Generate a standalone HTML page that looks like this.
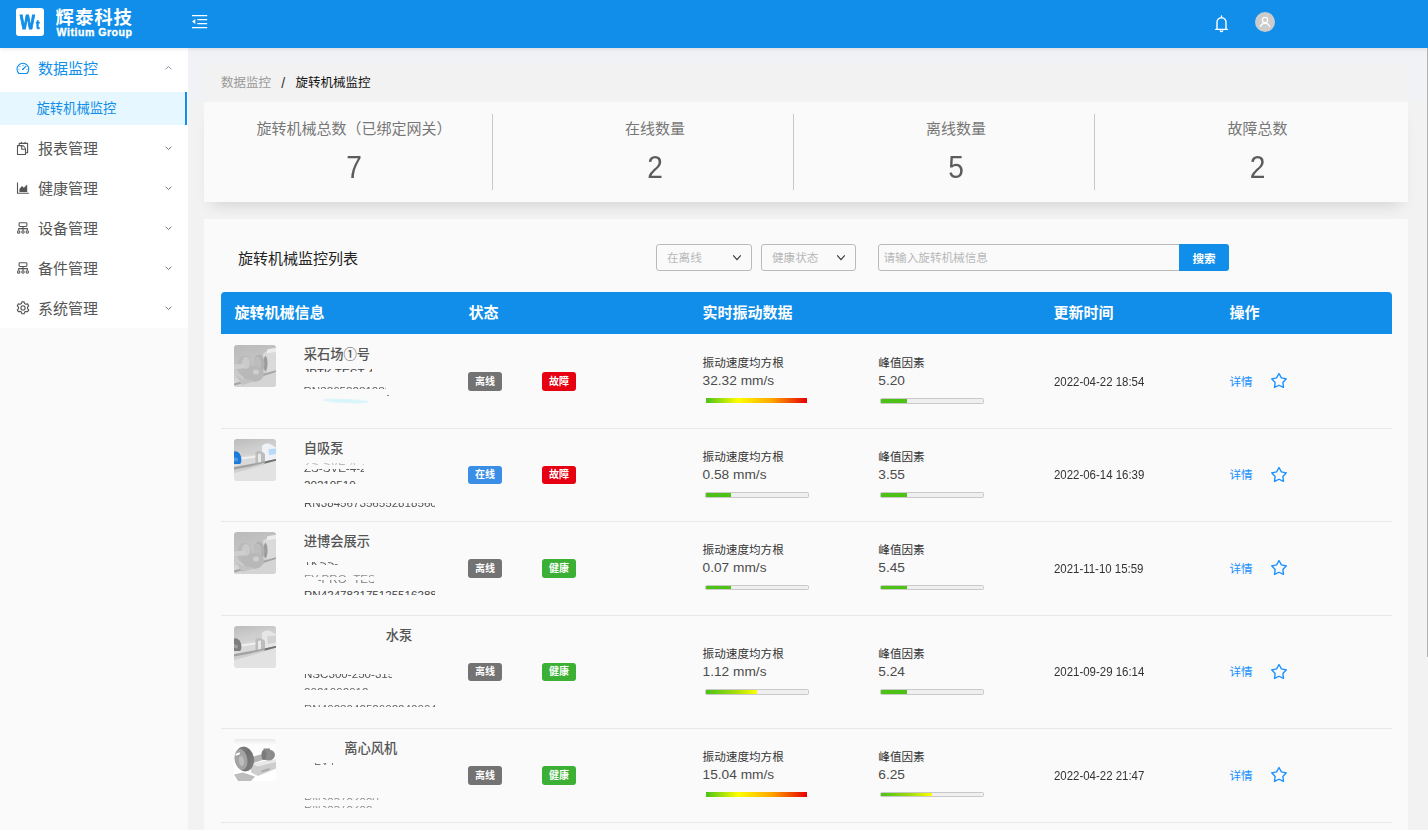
<!DOCTYPE html>
<html lang="zh-CN">
<head>
<meta charset="utf-8">
<title>旋转机械监控</title>
<style>
*{box-sizing:border-box;margin:0;padding:0}
html,body{width:1428px;height:830px;overflow:hidden}
body{position:relative;background:#f0f2f5;font-family:"Liberation Sans","Noto Sans CJK SC",sans-serif;color:#444;font-size:12px}
ul{list-style:none}
/* header */
.hd{position:absolute;left:0;top:0;width:1428px;height:48px;background:#108ee9;z-index:5;box-shadow:0 1px 4px rgba(0,21,41,.1)}
.logo{position:absolute;left:16px;top:8px;width:28px;height:28px;border-radius:3px;background:#fff;color:#108ee9;font-weight:bold;overflow:hidden}
.logo b{position:absolute;left:3.8px;top:2.7px;font-weight:700;font-size:19.5px;line-height:22px;transform:scaleX(.8);transform-origin:0 0;-webkit-text-stroke:1px #108ee9}
.logo i{position:absolute;left:19.8px;top:10px;font-weight:700;font-size:12.5px;line-height:14px;font-style:normal;transform:scaleX(.85);transform-origin:0 0;-webkit-text-stroke:.7px #108ee9}
.brand{position:absolute;left:55.6px;top:6.5px;color:#fff;font-weight:bold;font-size:18.4px;line-height:22px;white-space:nowrap;letter-spacing:.95px}
.brand2{position:absolute;left:56.6px;top:25.6px;color:#fff;font-weight:bold;font-size:10.6px;line-height:13px;white-space:nowrap;letter-spacing:.5px;-webkit-text-stroke:.35px #fff}
.fold{position:absolute;left:191px;top:14px}
.bell{position:absolute;left:1213px;top:13.7px}
.avatar{position:absolute;left:1255px;top:12px;width:20px;height:20px;border-radius:50%;background:#ccc}
/* sidebar */
.side{position:absolute;left:0;top:48px;width:188px;height:782px;background:#fafafa}
.menu{background:#fff;height:280px}
.menu li.t{position:relative;height:40px;line-height:42px;font-size:15px;color:#555;padding-left:38px}
.menu li.t svg.ic{position:absolute;left:16px;top:13px}
.menu li.t svg.ar{position:absolute;left:164px;top:16px}
.menu li.t.on{color:#108ee9}
.menu li.s{position:relative;height:33px;margin:4px 0 3px;line-height:34px;font-size:13.3px;color:#108ee9;background:#e6f7ff;padding-left:36.5px;border-right:2px solid #108ee9;width:187px}
.sb{position:absolute;left:1427px;top:48px;width:1px;height:609px;background:#b2b2b2;z-index:6}
/* main */
.wrap{position:absolute;left:188px;top:101px;width:1240px;height:729px;background:#f2f2f2}
.bcbox{position:absolute;left:204px;top:65px;width:1204px;height:37px;background:#f2f2f2}
.bc{position:absolute;left:221px;top:72.6px;font-size:12.5px;line-height:20px;color:#999;white-space:nowrap}
.bc em{font-style:normal;color:#111}
.bc span{display:inline-block;width:24.5px;text-align:center;color:#333;font-size:14px;line-height:20px;vertical-align:top;position:relative;top:.5px}
.stats{position:absolute;left:204px;top:102px;width:1204px;height:100px;background:#fafafa;box-shadow:0 10px 15px -8px rgba(0,0,0,.14);display:flex}
.stats .c{flex:1;padding:12px 12px 12px 12px}
.stats .c div{height:76px;border-right:1px solid #c8c8c8;text-align:center}
.stats .c:last-child div{border-right:0}
.stats p{font-size:15px;line-height:20px;color:#777;padding-top:4.5px}
.stats strong{display:block;font-weight:normal;font-size:32px;line-height:40px;color:#5c5c5c;margin-top:8px;transform:scaleX(.88)}
.card{position:absolute;left:204px;top:219px;width:1204px;height:640px;background:#fafafa}
.ttl{position:absolute;left:34px;top:28.7px;font-size:15px;line-height:22px;color:#222}
.sel{position:absolute;top:25px;height:27px;border:1px solid #bbb;border-radius:3px;font-size:11.6px;line-height:25px;color:#b8b8b8;padding-left:10px;background:#fafafa}
.sel svg{position:absolute;right:9px;top:9px}
.inp{position:absolute;left:674px;top:25px;width:303px;height:27px;border:1px solid #bbb;border-radius:3px 0 0 3px;font-size:11.6px;line-height:25px;color:#b8b8b8;padding-left:4.5px}
.btn{position:absolute;left:975px;top:25px;width:50px;height:27px;background:#108ee9;color:#fff;font-weight:bold;font-size:11.6px;line-height:29px;text-align:center;border-radius:0 3px 3px 0}
.tb{position:absolute;left:17px;top:73px;width:1171px}
.thd{display:flex;height:42px;background:#108ee9;border-radius:4px 4px 0 0;color:#fff;font-size:15px;font-weight:bold;line-height:42px}
.th1{padding-left:13.5px}
.tr{display:flex;border-bottom:1px solid #e8e8e8}
.td{position:relative;display:flex;align-items:center;height:100%}
.c1{width:234px;display:block;padding-left:13px}
.c2{width:234px;padding-left:13px}
.c3{width:351px;padding-left:13.6px}
.c4{width:176px;padding-left:14px}
.c5{width:176px;padding-left:13.5px}
svg.th{position:absolute;left:13px;display:block}
.nm{position:absolute;left:82.7px;font-size:13.3px;font-weight:500;line-height:20px;color:#555;white-space:nowrap}
.fr{position:absolute;overflow:hidden;color:#444;font-size:11.6px;line-height:14px;white-space:nowrap}
.fr i{position:absolute;left:0;font-style:normal}
.sm{position:absolute;left:102px;top:64.6px;width:46px;height:4.2px;border-radius:50%;background:#d9f5fa;transform:rotate(2.5deg);filter:blur(.6px)}
.dot{position:absolute;left:166px;top:61px;width:1.6px;height:1px;background:#8a8a8a}
.bd{display:inline-block;width:34px;height:19px;border-radius:3px;color:#fff;font-size:10px;font-weight:bold;line-height:19px;text-align:center}
.bd.off{background:#737373}.bd.err{background:#e60012}.bd.on{background:#3a8ee6}.bd.ok{background:#3cb034}
.grp{flex:none;width:175.7px;height:52px}
.bar{height:16px;padding-top:7px}
.c3 p{font-size:11.6px;line-height:16px;color:#333;white-space:nowrap}
.c3 b{display:block;font-weight:normal;font-size:13.7px;line-height:20px;color:#4c4c4c;white-space:nowrap}
.rb{margin:.3px 0 0 3px;width:101.4px;height:5.2px;background:linear-gradient(to right,#4bc21a 0,#ff0 32%,#ffa500 65%,#e60000 100%)}
.mt{margin:0 0 0 2.2px;width:104px;height:5.7px;border:1px solid #c9c9c9;border-radius:1.5px;background:#efefef;overflow:hidden}
.mt i{display:block;height:4px;background:#4cc215}
.mt i.h{background:linear-gradient(to right,#4bc21a 0,#9fdc0d 55%,#ff0 100%)}
.dt{display:inline-block;font-size:11.45px;line-height:16px;color:#333;white-space:nowrap;transform:scaleY(1.07);transform-origin:50% 30%}
.c5 a{font-size:11.6px;color:#1890ff;position:relative;top:-.4px}
.dt.up{margin-top:-2px}
.c5 a.up{top:-1.4px}
.star{margin-left:17.3px;position:relative;top:-.4px}
</style>
</head>
<body>
<svg width="0" height="0" style="position:absolute" aria-hidden="true">
  <defs>
    <filter id="bl1" x="-20%" y="-20%" width="140%" height="140%"><feGaussianBlur stdDeviation="0.7"/></filter>
    <filter id="bl2" x="-20%" y="-20%" width="140%" height="140%"><feGaussianBlur stdDeviation="0.4"/></filter>
    <linearGradient id="ga" x1="0" y1="0" x2="0.3" y2="1"><stop offset="0" stop-color="#bababa"/><stop offset=".5" stop-color="#c4c4c4"/><stop offset="1" stop-color="#d8d8d8"/></linearGradient>
    <linearGradient id="gb" x1="0" y1="0" x2="0.25" y2="1"><stop offset="0" stop-color="#bcbcbc"/><stop offset=".3" stop-color="#cdcdcd"/><stop offset=".7" stop-color="#dddddd"/><stop offset="1" stop-color="#efefef"/></linearGradient>
    <linearGradient id="gd" x1="0" y1="0" x2="0" y2="1"><stop offset="0" stop-color="#e9e9e9"/><stop offset=".14" stop-color="#fdfdfd"/><stop offset="1" stop-color="#ffffff"/></linearGradient>
    <linearGradient id="gw" x1="0" y1="0" x2="1" y2="1"><stop offset="0" stop-color="#8d8d8d"/><stop offset=".5" stop-color="#6f6f6f"/><stop offset="1" stop-color="#858585"/></linearGradient>
    <clipPath id="cp"><rect width="42" height="42" rx="3"/></clipPath>
    <symbol id="img-a" viewBox="0 0 42 42"><g clip-path="url(#cp)">
      <rect width="42" height="42" fill="url(#ga)"/>
      <g filter="url(#bl1)">
        <path d="M0 34L42 26V42H0Z" fill="#d4d4d4"/>
        <path d="M29 9c4-4 9-6 13-6v23l-8 3.5c-3-6-5-13-5-20.5Z" fill="#dadada"/>
        <path d="M33 4.5c3-1 6-1.5 9-1.5v4c-3 0-6 .5-9 1.5Z" fill="#ececec"/>
        <path d="M0 38.5l12-3.5 18-6.5 12-3.3v1.9l-12 3.6-18 6.5-12 3.5Z" fill="#a6a6a6"/>
        <ellipse cx="31.5" cy="18.5" rx="2" ry="7.5" fill="#9b9b9b"/>
        <ellipse cx="25" cy="19" rx="5.5" ry="9.5" fill="#b1b1b1"/>
        <ellipse cx="23.5" cy="19.5" rx="3.8" ry="8" fill="#bdbdbd"/>
        <ellipse cx="10.5" cy="21" rx="7.5" ry="10.5" fill="#bababa"/>
        <ellipse cx="19" cy="29" rx="11" ry="8" fill="#b8b8b8"/>
        <ellipse cx="12" cy="18" rx="4" ry="6" fill="#cacaca"/>
        <ellipse cx="22" cy="27" rx="3" ry="2.5" fill="#cfcfcf"/>
        <path d="M0 19.5l11-1v4.5L0 24.5Z" fill="#cecece"/>
        <path d="M2 30l8 4 12 2-14 4Z" fill="#c2c2c2"/>
      </g></g></symbol>
    <symbol id="img-b" viewBox="0 0 42 42"><g clip-path="url(#cp)">
      <rect width="42" height="42" fill="url(#gb)"/>
      <g filter="url(#bl1)">
        <path d="M0 27L42 20V42H0Z" fill="#e2e2e2"/>
        <path d="M28 7c2-2.5 6-3 8-2l6 3.5v12l-9 3-5-1.5Z" fill="#eef1f6"/>
        <path d="M34.5 10.2l7.5-.7v5.5l-7 1.2Z" fill="#b9daf6"/>
        <path d="M6 17.5l17-2.5v9L6 27Z" fill="#d9d9d9"/>
        <path d="M7 18.5l15-2v2l-15 2Z" fill="#f0f0f0"/>
        <path d="M21.5 13c2-1.5 5-1.5 7 0l2.5 2v9.5l-9.5 2.5Z" fill="#bcbcbc"/>
        <path d="M24 15l3-.5v9l-3 .8Z" fill="#e8e8e8"/>
        <path d="M0 28l30-5.5 12-2.5v1.8L14 29.5 0 33.5Z" fill="#a2a2a2"/>
        <path d="M0 30.5l14-2.5 16-4v1.5l-16 5-14 3.5Z" fill="#cfcfcf"/>
        <path d="M0 12.5c4-1.5 7 3 7.3 7 .2 3-.3 5-1.3 5.5H0Z" fill="#1f7ad8"/>
        <path d="M0 18l4 1.5-.5 3L0 22Z" fill="#4f9cea"/>
        <path d="M31 22.5l11-2.5v1.6l-11 2.7Z" fill="#6e6e6e"/>
      </g></g></symbol>
    <symbol id="img-c" viewBox="0 0 42 42"><g clip-path="url(#cp)">
      <rect width="42" height="42" fill="url(#gb)"/>
      <g filter="url(#bl1)">
        <path d="M0 27L42 20V42H0Z" fill="#e2e2e2"/>
        <path d="M28 7c2-2.5 6-3 8-2l6 3.5v12l-9 3-5-1.5Z" fill="#e6e6e6"/>
        <path d="M33 10.5l9-1v7l-8 1.5Z" fill="#d2d2d2"/>
        <path d="M6 17.5l17-2.5v9L6 27Z" fill="#d9d9d9"/>
        <path d="M7 18.5l15-2v2l-15 2Z" fill="#f0f0f0"/>
        <path d="M21.5 13c2-1.5 5-1.5 7 0l2.5 2v9.5l-9.5 2.5Z" fill="#bcbcbc"/>
        <path d="M24 15l3-.5v9l-3 .8Z" fill="#e8e8e8"/>
        <path d="M0 28l30-5.5 12-2.5v1.8L14 29.5 0 33.5Z" fill="#a2a2a2"/>
        <path d="M0 30.5l14-2.5 16-4v1.5l-16 5-14 3.5Z" fill="#cfcfcf"/>
        <path d="M0 12.5c4-1.5 7 3 7.3 7 .2 3-.3 5-1.3 5.5H0Z" fill="#7e7e7e"/>
        <path d="M0 18l4 1.5-.5 3L0 22Z" fill="#a0a0a0"/>
        <path d="M31 22.5l11-2.5v1.6l-11 2.7Z" fill="#6e6e6e"/>
      </g></g></symbol>
    <symbol id="img-d" viewBox="0 0 42 42"><g clip-path="url(#cp)">
      <rect width="42" height="42" fill="url(#gd)"/>
      <g filter="url(#bl2)">
        <path d="M0 35.5l9-2 12 4-4 4.5H4Z" fill="#bdbdbd"/>
        <path d="M17 25l25-4.5v9L24 37l-7-3.5Z" fill="#cdcdcd"/>
        <path d="M17 25l11-2.5 14-2v2.5L24 27.5Z" fill="#e8e8e8"/>
        <path d="M18 18l12-3.5v6L18 24.5Z" fill="#b2b2b2"/>
        <ellipse cx="34.5" cy="16" rx="6.5" ry="5.5" fill="#8c8c8c"/>
        <ellipse cx="30" cy="16" rx="2.5" ry="5" fill="#7a7a7a"/>
        <rect x="29.5" y="9.5" width="6.5" height="2.5" fill="#888"/>
        <path d="M27.5 31.5l8-2.5v2l-8 2.5Z" fill="#a9a9a9"/>
        <ellipse cx="10.5" cy="20" rx="9.5" ry="12.5" transform="rotate(-10 10.5 20)" fill="url(#gw)"/>
        <ellipse cx="7" cy="20.5" rx="6.3" ry="10.5" transform="rotate(-10 7 20.5)" fill="#a3a3a3"/>
        <ellipse cx="7.5" cy="22" rx="2.5" ry="5" transform="rotate(-10 7.5 22)" fill="#bdbdbd"/>
        <ellipse cx="3.8" cy="15" rx="2.6" ry="1.1" transform="rotate(-22 3.8 15)" fill="#fff"/>
      </g></g></symbol>
  </defs>
</svg>
<div class="sb"></div>
<div class="hd">
  <div class="logo"><b>W</b><i>t</i></div>
  <div class="brand">辉泰科技</div>
  <div class="brand2">Witium Group</div>
  <svg class="fold" width="17" height="16" viewBox="0 0 17 16"><path d="M1 1.5h15.2M6.3 5.5h9.9M6.3 9.5h9.9M1 13.5h15.2" fill="none" stroke="#fff" stroke-width="1.25"/><path d="M1 7.5l3.3-2.5v5z" fill="#fff"/></svg>
  <svg class="bell" width="17" height="20" viewBox="0 0 17 20"><path d="M8.5 1.9v1.3M4 15V8.3a4.5 4.5 0 0 1 9 0V15M2.7 15.4h11.6M7.3 16.8a1.3 1.3 0 0 0 2.4 0" fill="none" stroke="#fff" stroke-width="1.4" stroke-linecap="round" stroke-linejoin="round"/></svg>
  <div class="avatar"><svg width="20" height="20" viewBox="0 0 20 20"><circle cx="10" cy="8" r="2.6" fill="none" stroke="#fff" stroke-width="1.2"/><path d="M5.2 15.2a4.9 4.9 0 0 1 9.6 0" fill="none" stroke="#fff" stroke-width="1.2"/></svg></div>
</div>
<div class="side">
  <ul class="menu">
    <li class="t on"><svg class="ic" style="left:15.5px" width="14" height="14" viewBox="0 0 14 14"><g fill="none" stroke="#108ee9" stroke-width="1.1"><path d="M2.86 12.5A5.9 5.9 0 1 1 10.94 12.5Z" stroke-linejoin="round"/><path d="M6.9 8.3l3-2.9" stroke-linecap="round" stroke-width="1.2"/></g><g fill="#108ee9"><circle cx="7" cy="4.4" r=".55"/><circle cx="3.9" cy="5.6" r=".55"/><circle cx="2.9" cy="8.3" r=".55"/><circle cx="11" cy="8.3" r=".55"/><circle cx="6.9" cy="8.3" r=".75"/></g></svg>数据监控<svg class="ar" width="9" height="8" viewBox="0 0 9 8"><path d="M1.6 5.2l2.9-2.7 2.9 2.7" fill="none" stroke="#7a8a9a" stroke-width=".95"/></svg></li>
    <li class="s">旋转机械监控</li>
    <li class="t"><svg class="ic" width="14" height="14" viewBox="0 0 14 14"><g fill="none" stroke="#555" stroke-width="1.1" stroke-linejoin="round"><path d="M3.2 4.4V2.4h8.4v9.3H9.6"/><path d="M5.5 2.3V1.4M9.1 2.3V1.4" stroke-linecap="round"/><path d="M1.5 4.6h4c2.2 0 4 1.8 4 4V13.5H1.5Z"/><path d="M5.7 4.9v3.3h3.5"/></g></svg>报表管理<svg class="ar" width="9" height="8" viewBox="0 0 9 8"><path d="M1.6 2.8l2.9 2.7 2.9-2.7" fill="none" stroke="#707070" stroke-width=".95"/></svg></li>
    <li class="t"><svg class="ic" width="14" height="14" viewBox="0 0 14 14"><path d="M1.5 1.5V12.3H12.8" fill="none" stroke="#555" stroke-width="1.1"/><path d="M3.4 11V8l2.6-3.1 1.9 1.9 3.3-3.3V11Z" fill="#555"/></svg>健康管理<svg class="ar" width="9" height="8" viewBox="0 0 9 8"><path d="M1.6 2.8l2.9 2.7 2.9-2.7" fill="none" stroke="#707070" stroke-width=".95"/></svg></li>
    <li class="t"><svg class="ic" width="14" height="14" viewBox="0 0 14 14"><g fill="none" stroke="#555" stroke-width="1.1"><rect x="3.1" y="1.7" width="7.8" height="3.8" rx=".9"/><path d="M7 5.5v4M2.7 9.6V7.6h8.6v2"/><circle cx="2.7" cy="11" r="1.2"/><circle cx="7" cy="11" r="1.2"/><circle cx="11.3" cy="11" r="1.2"/></g></svg>设备管理<svg class="ar" width="9" height="8" viewBox="0 0 9 8"><path d="M1.6 2.8l2.9 2.7 2.9-2.7" fill="none" stroke="#707070" stroke-width=".95"/></svg></li>
    <li class="t"><svg class="ic" width="14" height="14" viewBox="0 0 14 14"><g fill="none" stroke="#555" stroke-width="1.1"><rect x="3.1" y="1.7" width="7.8" height="3.8" rx=".9"/><path d="M7 5.5v4M2.7 9.6V7.6h8.6v2"/><circle cx="2.7" cy="11" r="1.2"/><circle cx="7" cy="11" r="1.2"/><circle cx="11.3" cy="11" r="1.2"/></g></svg>备件管理<svg class="ar" width="9" height="8" viewBox="0 0 9 8"><path d="M1.6 2.8l2.9 2.7 2.9-2.7" fill="none" stroke="#707070" stroke-width=".95"/></svg></li>
    <li class="t"><svg class="ic" width="14" height="14" viewBox="0 0 14 14"><g fill="none" stroke="#555" stroke-width="1.1" stroke-linejoin="round"><path d="M5.9.9h2.2l.5 1.7 1.3.7 1.7-.4 1.1 1.9-1.2 1.3v1.5l1.2 1.3-1.1 1.9-1.7-.4-1.3.7-.5 1.7H5.9l-.5-1.7-1.3-.7-1.7.4-1.1-1.9 1.2-1.3V6.1L1.3 4.8l1.1-1.9 1.7.4 1.3-.7Z"/><circle cx="7" cy="6.9" r="2.1"/></g></svg>系统管理<svg class="ar" width="9" height="8" viewBox="0 0 9 8"><path d="M1.6 2.8l2.9 2.7 2.9-2.7" fill="none" stroke="#707070" stroke-width=".95"/></svg></li>
  </ul>
</div>
<div class="wrap"></div>
<div class="bcbox"></div>
<div class="bc">数据监控<span>/</span><em>旋转机械监控</em></div>
<div class="stats">
  <div class="c"><div><p>旋转机械总数（已绑定网关）</p><strong>7</strong></div></div>
  <div class="c"><div><p>在线数量</p><strong>2</strong></div></div>
  <div class="c"><div><p>离线数量</p><strong>5</strong></div></div>
  <div class="c"><div><p>故障总数</p><strong>2</strong></div></div>
</div>
<div class="card">
  <div class="ttl">旋转机械监控列表</div>
  <div class="sel" style="left:452px;width:96px">在离线<svg width="10" height="8" viewBox="0 0 10 8"><path d="M1.2 1.4l3.8 4.3 3.8-4.3" fill="none" stroke="#333" stroke-width="1.05"/></svg></div>
  <div class="sel" style="left:557px;width:95px">健康状态<svg width="10" height="8" viewBox="0 0 10 8"><path d="M1.2 1.4l3.8 4.3 3.8-4.3" fill="none" stroke="#333" stroke-width="1.05"/></svg></div>
  <div class="inp">请输入旋转机械信息</div>
  <div class="btn">搜索</div>
  <div class="tb">
  <div class="thd"><div class="th1" style="width:234px">旋转机械信息</div><div class="th1" style="width:234px">状态</div><div class="th1" style="width:351px">实时振动数据</div><div class="th1" style="width:176px">更新时间</div><div class="th1" style="width:176px">操作</div></div>
  <div class="tr" style="height:95px">
    <div class="td c1" style="padding-top:11px"><svg class="th" width="42" height="42"><use href="#img-a"/></svg><div class="nm">采石场①号</div><span class="sm"></span><span class="dot"></span><span class="fr" style="left:82.5px;top:34.6px;width:68px;height:3.8px;opacity:1"><i style="top:-2.5px;left:0px">JPTK TEST 4</i></span><span class="fr" style="left:82.5px;top:52.9px;width:82px;height:1.9px;opacity:0.85"><i style="top:-2.5px;left:0px">RN386582810880</i></span></div>
    <div class="td c2"><span class="bd off">离线</span><span class="bd err" style="margin-left:40px">故障</span></div>
    <div class="td c3"><div class="grp"><p>振动速度均方根</p><b>32.32 mm/s</b><div class="bar"><div class="rb"></div></div></div><div class="grp"><p>峰值因素</p><b>5.20</b><div class="bar"><div class="mt"><i style="width:25%"></i></div></div></div></div>
    <div class="td c4"><span class="dt">2022-04-22 18:54</span></div>
    <div class="td c5"><a>详情</a><svg class="star" width="18" height="18" viewBox="0 0 18 18"><path d="M9.00 1.5 L11.38 5.92 L16.32 6.82 L12.85 10.45 L13.53 15.43 L9.00 13.25 L4.47 15.43 L5.15 10.45 L1.68 6.82 L6.62 5.92Z" fill="none" stroke="#1890ff" stroke-width="1.35" stroke-linejoin="round"/></svg></div>
  </div>
  <div class="tr" style="height:93px">
    <div class="td c1" style="padding-top:10px"><svg class="th" width="42" height="42"><use href="#img-b"/></svg><div class="nm">自吸泵</div><span class="fr" style="left:83px;top:34px;width:60px;height:2px;opacity:0.35"><i style="top:-6px;left:0px">ZS-SVE-4-20</i></span><span class="fr" style="left:83px;top:40px;width:60px;height:3px;opacity:0.9"><i style="top:-8.2px;left:0px">ZS-SVE-4-20</i></span><span class="fr" style="left:83px;top:51.2px;width:52px;height:3.6px;opacity:1"><i style="top:-2.5px;left:0px">20210510</i></span><span class="fr" style="left:83px;top:74.4px;width:131px;height:3.4px;opacity:0.9"><i style="top:-7.8px;left:0px">RN384567356552818560</i></span></div>
    <div class="td c2"><span class="bd on" style="height:18px;line-height:18px;margin-bottom:1px">在线</span><span class="bd err" style="margin-left:40px;height:18px;line-height:18px;margin-bottom:1px">故障</span></div>
    <div class="td c3"><div class="grp"><p>振动速度均方根</p><b>0.58 mm/s</b><div class="bar"><div class="mt"><i style="width:25%"></i></div></div></div><div class="grp"><p>峰值因素</p><b>3.55</b><div class="bar"><div class="mt"><i style="width:25%"></i></div></div></div></div>
    <div class="td c4"><span class="dt up">2022-06-14 16:39</span></div>
    <div class="td c5"><a class="up">详情</a><svg class="star" width="18" height="18" viewBox="0 0 18 18"><path d="M9.00 1.5 L11.38 5.92 L16.32 6.82 L12.85 10.45 L13.53 15.43 L9.00 13.25 L4.47 15.43 L5.15 10.45 L1.68 6.82 L6.62 5.92Z" fill="none" stroke="#1890ff" stroke-width="1.35" stroke-linejoin="round"/></svg></div>
  </div>
  <div class="tr" style="height:94px">
    <div class="td c1" style="padding-top:10px"><svg class="th" width="42" height="42"><use href="#img-a"/></svg><div class="nm">进博会展示</div><span class="fr" style="left:83px;top:40px;width:36px;height:3px;opacity:0.8"><i style="top:-6px;left:0px">TKSS-T</i></span><span class="fr" style="left:83px;top:52.5px;width:70px;height:2.5px;opacity:0.6"><i style="top:-2.5px;left:0px">FY-PRO_TEST</i></span><span class="fr" style="left:97px;top:57.5px;width:56px;height:4px;opacity:0.7"><i style="top:-7.2px;left:-14px">FY-PRO_TEST</i></span><span class="fr" style="left:83px;top:68.8px;width:131px;height:3.8px;opacity:1"><i style="top:-2.5px;left:0px">RN424782175125516288</i></span></div>
    <div class="td c2"><span class="bd off">离线</span><span class="bd ok" style="margin-left:40px">健康</span></div>
    <div class="td c3" style="padding-bottom:1.5px"><div class="grp"><p>振动速度均方根</p><b>0.07 mm/s</b><div class="bar"><div class="mt"><i style="width:25%"></i></div></div></div><div class="grp"><p>峰值因素</p><b>5.45</b><div class="bar"><div class="mt"><i style="width:25%"></i></div></div></div></div>
    <div class="td c4"><span class="dt up">2021-11-10 15:59</span></div>
    <div class="td c5"><a>详情</a><svg class="star" width="18" height="18" viewBox="0 0 18 18"><path d="M9.00 1.5 L11.38 5.92 L16.32 6.82 L12.85 10.45 L13.53 15.43 L9.00 13.25 L4.47 15.43 L5.15 10.45 L1.68 6.82 L6.62 5.92Z" fill="none" stroke="#1890ff" stroke-width="1.35" stroke-linejoin="round"/></svg></div>
  </div>
  <div class="tr" style="height:113px">
    <div class="td c1" style="padding-top:10px"><svg class="th" width="42" height="42"><use href="#img-c"/></svg><div class="nm" style="padding-left:82px">水泵</div><span class="fr" style="left:83px;top:57.6px;width:88px;height:5px;opacity:0.9"><i style="top:-6.2px;left:0px">NSC300-250-315</i></span><span class="fr" style="left:83px;top:71.2px;width:64px;height:3px;opacity:0.8"><i style="top:-2.5px;left:0px">2021092912</i></span><span class="fr" style="left:83px;top:88.6px;width:131px;height:2.6px;opacity:0.8"><i style="top:-2.5px;left:0px">RN402304252602240004</i></span></div>
    <div class="td c2"><span class="bd off" style="height:18px;line-height:18px;margin-bottom:1px">离线</span><span class="bd ok" style="margin-left:40px;height:18px;line-height:18px;margin-bottom:1px">健康</span></div>
    <div class="td c3"><div class="grp"><p>振动速度均方根</p><b>1.12 mm/s</b><div class="bar"><div class="mt"><i class="h" style="width:50%"></i></div></div></div><div class="grp"><p>峰值因素</p><b>5.24</b><div class="bar"><div class="mt"><i style="width:25%"></i></div></div></div></div>
    <div class="td c4"><span class="dt up">2021-09-29 16:14</span></div>
    <div class="td c5"><a class="up">详情</a><svg class="star" width="18" height="18" viewBox="0 0 18 18"><path d="M9.00 1.5 L11.38 5.92 L16.32 6.82 L12.85 10.45 L13.53 15.43 L9.00 13.25 L4.47 15.43 L5.15 10.45 L1.68 6.82 L6.62 5.92Z" fill="none" stroke="#1890ff" stroke-width="1.35" stroke-linejoin="round"/></svg></div>
  </div>
  <div class="tr" style="height:94px">
    <div class="td c1" style="padding-top:10px"><svg class="th" width="42" height="42"><use href="#img-d"/></svg><div class="nm" style="padding-left:40.5px">离心风机</div><span class="fr" style="left:93px;top:33.6px;width:21px;height:2px;opacity:0.7"><i style="top:-6px;left:0px">FY-01</i></span><span class="fr" style="left:83px;top:68.6px;width:78px;height:2px;opacity:0.55"><i style="top:-6px;left:0px">RN385782880</i></span><span class="fr" style="left:83px;top:76.8px;width:70px;height:2px;opacity:0.55"><i style="top:-6px;left:0px">RN38578288</i></span></div>
    <div class="td c2"><span class="bd off">离线</span><span class="bd ok" style="margin-left:40px">健康</span></div>
    <div class="td c3" style="padding-bottom:1.5px"><div class="grp"><p>振动速度均方根</p><b>15.04 mm/s</b><div class="bar"><div class="rb"></div></div></div><div class="grp"><p>峰值因素</p><b>6.25</b><div class="bar"><div class="mt"><i class="h" style="width:50%"></i></div></div></div></div>
    <div class="td c4"><span class="dt up">2022-04-22 21:47</span></div>
    <div class="td c5"><a>详情</a><svg class="star" width="18" height="18" viewBox="0 0 18 18"><path d="M9.00 1.5 L11.38 5.92 L16.32 6.82 L12.85 10.45 L13.53 15.43 L9.00 13.25 L4.47 15.43 L5.15 10.45 L1.68 6.82 L6.62 5.92Z" fill="none" stroke="#1890ff" stroke-width="1.35" stroke-linejoin="round"/></svg></div>
  </div>
  </div>
</div>
</body>
</html>
